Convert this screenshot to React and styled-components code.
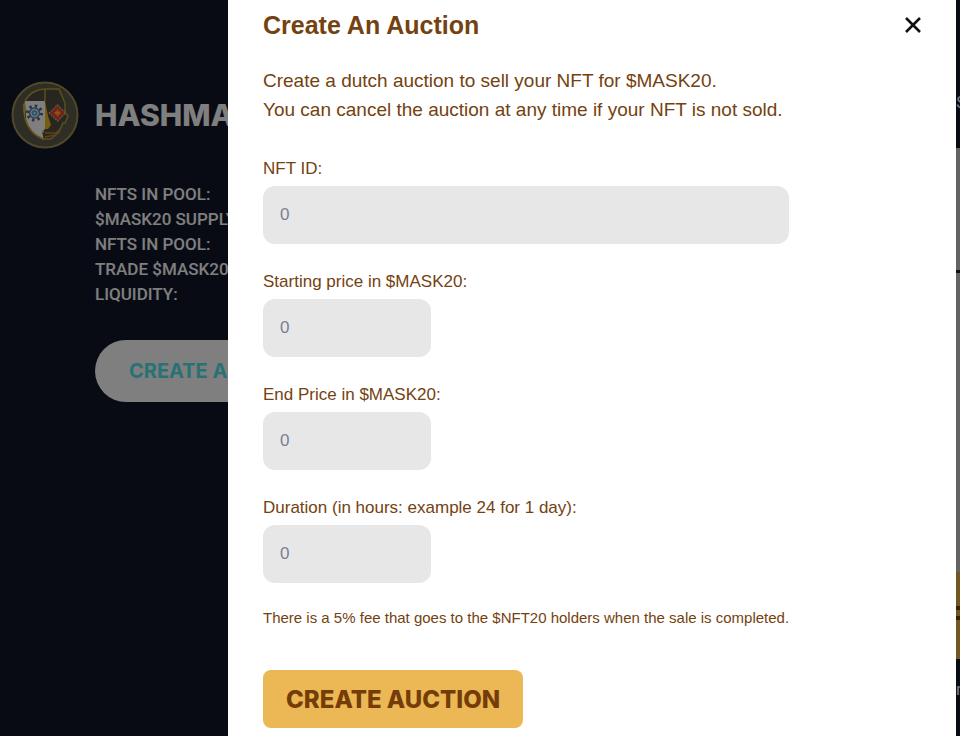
import styled, { createGlobalStyle } from "styled-components";

const GlobalStyle = createGlobalStyle`
  * {
    box-sizing: border-box;
  }
  body {
    margin: 0;
    background: #12172a;
    font-family: "Liberation Sans", Arial, sans-serif;
    overflow: hidden;
  }
  h1, h2, p, ul {
    margin: 0;
    padding: 0;
  }
  button, input {
    font-family: inherit;
  }
`;

const Page = styled.div`
  display: grid;
  grid-template-columns: minmax(0, 1fr) 4px;
  min-height: 100vh;
  overflow: hidden;
  background: #121628;
  color: #fff;
  font-family: Inter, sans-serif;
`;

const Pool = styled.section`
  display: grid;
  grid-template-columns: 68px 1fr;
  grid-template-rows: 68px auto auto;
  column-gap: 16px;
  row-gap: 33px;
  align-content: start;
  align-items: center;
  justify-items: start;
  padding: 81px 0 0 11px;
  white-space: nowrap;
`;

const PoolName = styled.h1`
  font-size: 30px;
  line-height: 36px;
  font-weight: 800;
`;

const Stats = styled.ul`
  grid-column: 2;
  list-style: none;
  font-family: Roboto, sans-serif;
  font-size: 17px;
  line-height: 25px;
  font-weight: 500;
`;

const PillButton = styled.button`
  grid-column: 2;
  height: 62px;
  padding: 0 34px;
  border: 0;
  border-radius: 31px;
  background: #fff;
  color: #50e4ea;
  font-family: Inter, sans-serif;
  font-size: 20px;
  font-weight: 700;
`;

const Listing = styled.aside`
  display: flex;
  flex-direction: column;
  font-family: Roboto, sans-serif;
  font-size: 17px;
  line-height: 24px;
  overflow: hidden;

  .supply {
    padding: 90px 0 34px;
  }
  .card {
    height: 424px;
    padding-top: 122px;
    background: #c6c6c2;
  }
  .rule {
    height: 3px;
    background: #222;
  }
  .buy {
    height: 87px;
    padding-top: 34px;
    background: #e0b040;
  }
  .stripe {
    height: 4px;
    margin-bottom: 6px;
    background: #70400a;
  }
  .note {
    padding-top: 18px;
  }
`;

const Overlay = styled.div`
  position: fixed;
  inset: 0;
  display: flex;
  padding: 0 4px 0 228px;
  background: rgba(0, 0, 0, 0.5);
`;

const Modal = styled.div`
  flex: 1;
  padding: 10px 35px 8px;
  background: #fff;
  color: #744210;
`;

const Header = styled.header`
  display: flex;
  align-items: center;
  justify-content: space-between;
  margin-bottom: 26px;

  h2 {
    font-size: 25px;
    line-height: 30px;
    font-weight: 700;
  }
`;

const CloseButton = styled.button`
  display: flex;
  padding: 0;
  border: 0;
  background: none;
  color: #111;
`;

const Intro = styled.p`
  margin-bottom: 33px;
  font-size: 19px;
  line-height: 29px;
`;

const Form = styled.form`
  display: flex;
  flex-direction: column;
  align-items: flex-start;
  gap: 26px;
  width: 80%;
`;

const Field = styled.div`
  display: flex;
  flex-direction: column;
  gap: 5px;
  width: 100%;

  label {
    font-size: 17px;
    line-height: 24px;
  }
  input {
    width: ${(props) => (props.$wide ? "100%" : "32%")};
    height: 58px;
    padding: 0 17px;
    border: 0;
    border-radius: 12px;
    background: #e7e7e7;
    color: #744210;
    font-size: 17px;
  }
  input::placeholder {
    color: #7c8090;
    opacity: 1;
  }
`;

const Fee = styled.p`
  font-size: 15px;
  line-height: 18px;
  white-space: nowrap;
`;

const SubmitButton = styled.button`
  height: 58px;
  margin-top: 17px;
  padding: 0 23px;
  border: 0;
  border-radius: 8px;
  background: #ecb755;
  color: #743c06;
  font-size: 24px;
  font-weight: 800;
  white-space: nowrap;

  && {
    font-family: Inter, sans-serif;
  }
`;

const stats = [
  "NFTS IN POOL:",
  "$MASK20 SUPPLY:",
  "NFTS IN POOL:",
  "TRADE $MASK20:",
  "LIQUIDITY:",
];

const fields = [
  { id: "nft-id", label: "NFT ID:", wide: true },
  { id: "start-price", label: "Starting price in $MASK20:" },
  { id: "end-price", label: "End Price in $MASK20:" },
  { id: "duration", label: "Duration (in hours: example 24 for 1 day):" },
];

const MaskLogo = () => (
  <svg width="68" height="68" viewBox="0 0 68 68" fill="none" aria-hidden="true">
    <circle cx="34" cy="34" r="32.5" fill="#5c5a4c" stroke="#a0924e" strokeWidth="2" />
    <path d="M14 20 24 10 34 8H48L55 21V31L57 36 54 42H52L49 51 40 58H31L19 49 14 37Z" fill="#504d42" />
    <path d="M14 20H34V48L31 51 33 59C24 56 17 48 15 38Z" fill="#fff" />
    <path d="M14 20C18 12 26 8 34 8H48L54 22V31L57 35 54 42H52L48 51 40 58H32C24 55 17 48 14 37M34 8V20M48 8 54 22" stroke="#b8a034" strokeWidth="1.5" />
    <path d="M12 24 14 20V37L18 47 26 55C17 49 12 40 12 24Z" fill="#e0b820" />
    <path d="M34 20 37 35 40 44 37 48H33V52H31L34 47Z" fill="#f0bd18" />
    <path d="M34 52H45L50 47M34 56 44 54" stroke="#c48428" strokeWidth="1.5" />
    <circle cx="23.500" cy="32" r="7" stroke="#52647c" strokeWidth="3" strokeDasharray="2.4 3.1" />
    <circle cx="23.500" cy="32" r="5" fill="#dce8f0" stroke="#60809c" strokeWidth="1.5" />
    <circle cx="23.500" cy="32" r="2.8" fill="#48a8e0" />
    <circle cx="23.500" cy="32" r="1.1" fill="#e8f8ff" />
    <path d="m46.500 24 8 8-8 8-8-8Z" fill="#d8402c" stroke="#d8a090" strokeWidth="1.5" strokeDasharray="2 1" />
    <path d="m46.500 27 5 5-5 5-5-5Z" fill="#ff5410" />
    <path d="M46.500 29.500v5M44 32h5" stroke="#ffb040" strokeWidth="2" />
  </svg>
);

const App = () => {
  return (
    <>
      <GlobalStyle />
      <Page>
        <Pool>
          <MaskLogo />
          <PoolName>HASHMASKS</PoolName>
          <Stats>
            {stats.map((text, index) => (
              <li key={index}>{text}</li>
            ))}
          </Stats>
          <PillButton type="button">CREATE AUCTION</PillButton>
        </Pool>
        <Listing>
          <div className="supply">$</div>
          <div className="card">
            <div className="rule"></div>
          </div>
          <div className="buy">
            <div className="stripe"></div>
            <div className="stripe"></div>
          </div>
          <div className="note">n</div>
        </Listing>
      </Page>
      <Overlay>
        <Modal role="dialog" aria-labelledby="auction-title">
          <Header>
            <h2 id="auction-title">Create An Auction</h2>
            <CloseButton type="button" aria-label="Close">
              <svg width="16" height="16" viewBox="0 0 16 16" stroke="currentColor" strokeWidth="2.6">
                <path d="M1 1 15 15M15 1 1 15" />
              </svg>
            </CloseButton>
          </Header>
          <Intro>
            Create a dutch auction to sell your NFT for $MASK20.
            <br />
            You can cancel the auction at any time if your NFT is not sold.
          </Intro>
          <Form>
            {fields.map((field) => (
              <Field key={field.id} $wide={field.wide}>
                <label htmlFor={field.id}>{field.label}</label>
                <input id={field.id} type="text" placeholder="0" />
              </Field>
            ))}
            <Fee>There is a 5% fee that goes to the $NFT20 holders when the sale is completed.</Fee>
            <SubmitButton type="button">CREATE AUCTION</SubmitButton>
          </Form>
        </Modal>
      </Overlay>
    </>
  );
};

export default App;
